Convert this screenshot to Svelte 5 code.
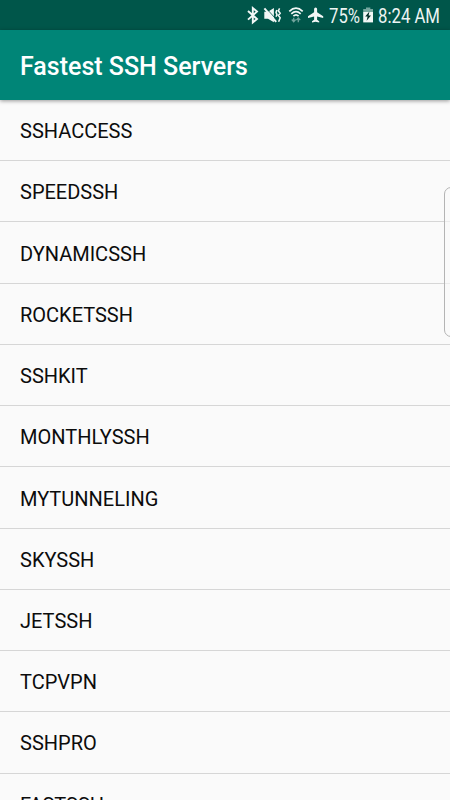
<script lang="ts">
	type Server = {
		id: number;
		nombre: string;
	};

	let battery = $state(75);
	let time = $state('8:24 AM');

	let servers = $state<Server[]>([
		{ id: 1, nombre: 'SSHACCESS' },
		{ id: 2, nombre: 'SPEEDSSH' },
		{ id: 3, nombre: 'DYNAMICSSH' },
		{ id: 4, nombre: 'ROCKETSSH' },
		{ id: 5, nombre: 'SSHKIT' },
		{ id: 6, nombre: 'MONTHLYSSH' },
		{ id: 7, nombre: 'MYTUNNELING' },
		{ id: 8, nombre: 'SKYSSH' },
		{ id: 9, nombre: 'JETSSH' },
		{ id: 10, nombre: 'TCPVPN' },
		{ id: 11, nombre: 'SSHPRO' },
		{ id: 12, nombre: 'FASTSSH' }
	]);
</script>

<div class="screen">
	<div class="status-bar">
		<svg class="icons" width="88" height="30" viewBox="240 0 88 30">
			<!-- bluetooth -->
			<path
				d="M248 11 L257 19 L252.8 22.5 V8 L257 11.6 L248 19.6"
				fill="none"
				stroke="#f2f7f6"
				stroke-width="1.9"
			/>
			<!-- vibrate / muted -->
			<path d="M264.3 11.8 H268 L273.9 8 V22.3 L268 18.8 H264.3 Z" fill="#f2f7f6" />
			<path d="M266.4 8.6 L275.6 18.6" stroke="#00564a" stroke-width="0.9" />
			<path d="M264.4 8.4 L276.2 21.8" stroke="#f2f7f6" stroke-width="2" />
			<path
				d="M279.6 8.4 L278.3 10.8 L280.2 13.2 L278.4 15.5 L280.2 17.9 L278.6 21.8 M276.8 10 L276 12.4 L277 14.6 L276 16.8"
				fill="none"
				stroke="#f2f7f6"
				stroke-width="1.5"
			/>
			<!-- wifi -->
			<path
				d="M289.3 11.4 Q296 5 302.7 11.4 M291.3 13.8 Q296 9.4 300.7 13.8 M293.4 16.2 Q296 13.6 298.6 16.2"
				fill="none"
				stroke="#f2f7f6"
				stroke-width="1.7"
			/>
			<path
				d="M293.7 17.8 V21.3 M291.8 19.5 L293.7 21.7 L295.6 19.5 M298.3 22.2 V18.5 M296.4 20.2 L298.3 18 L300.2 20.2"
				fill="none"
				stroke="#71a49d"
				stroke-width="1.3"
			/>
			<!-- airplane -->
			<path
				d="M323.2 18 V16.2 L317.1 12.2 V9 A1.5 1.5 0 0 0 314.1 9 V12.2 L308 16.2 V18 L314.1 16.4 V19.8 L312 21.3 V22.6 L315.6 21.7 L319.2 22.6 V21.3 L317.1 19.8 V16.4 Z"
				fill="#f2f7f6"
			/>
		</svg>
		<svg class="info" width="122" height="30" viewBox="328 0 122 30">
			<text x="329" y="22.5" textLength="31" lengthAdjust="spacingAndGlyphs">{battery}%</text>
			<path d="M366 7.6 H370.3 V9 H373 V12.2 H363.2 V9 H366 Z" fill="#76a79f" />
			<path d="M363.2 12 H373 V22.4 H363.2 Z" fill="#f2f7f6" />
			<path d="M369.4 11.4 L365.2 16.6 H367.6 L366.6 20.8 L371 15.4 H368.6 Z" fill="#002b25" />
			<text x="378" y="22.5" textLength="62" lengthAdjust="spacingAndGlyphs">{time}</text>
		</svg>
	</div>

	<header class="toolbar">
		<h1>Fastest SSH Servers</h1>
	</header>

	<ul class="server-list">
		{#each servers as server (server.id)}
			<li>{server.nombre}</li>
		{/each}
	</ul>

	<div class="edge-handle"></div>
</div>

<style>
	:global(body) {
		margin: 0;
		background-color: #fafafa;
	}

	.screen {
		position: relative;
		width: 450px;
		height: 800px;
		overflow: hidden;
		background-color: #fafafa;
		font-family: Roboto, 'Liberation Sans', sans-serif;
	}

	.status-bar {
		display: flex;
		justify-content: flex-end;
		height: 30px;
		background-color: #00564a;
	}

	.info text {
		font-size: 19.5px;
		fill: #edf4f3;
	}

	.toolbar {
		position: relative;
		display: flex;
		align-items: center;
		height: 70px;
		padding: 4px 20px 0;
		box-sizing: border-box;
		background-color: #008577;
		box-shadow: 0 1px 4px rgba(0, 0, 0, 0.4);
	}

	h1 {
		margin: 0;
		color: #fff;
		font-size: 25px;
		font-weight: 500;
		line-height: 30px;
	}

	.server-list {
		margin: 0;
		padding: 0;
		list-style: none;
	}

	.server-list li {
		display: flex;
		align-items: center;
		height: 61.24px;
		padding: 2px 20px 0;
		box-sizing: border-box;
		border-bottom: 1px solid #d6d6d6;
		color: #0c0c0c;
		font-size: 20px;
	}

	/* pull-out panel grip over the right edge of the screen */
	.edge-handle {
		position: absolute;
		top: 187px;
		right: -8px;
		width: 14px;
		height: 150px;
		box-sizing: border-box;
		border: 1px solid #b4b4b4;
		border-radius: 7px;
		background-color: rgba(250, 250, 250, 0.6);
	}
</style>
